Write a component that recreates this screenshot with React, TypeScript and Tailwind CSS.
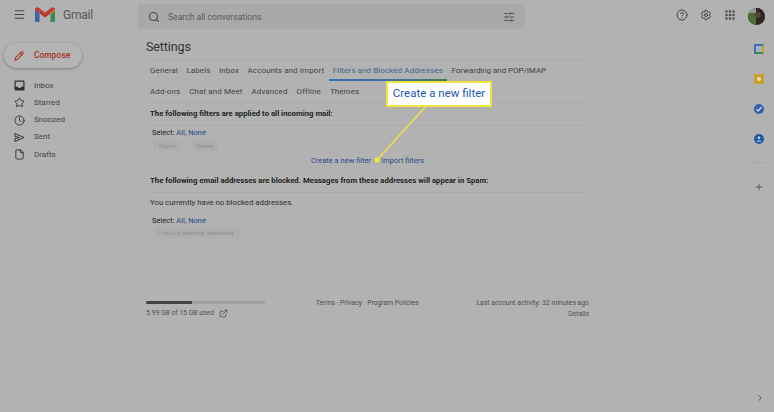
import { CircleHelp, ExternalLink, File, Clock, Menu, Pencil, Plus, Search, Settings, SlidersHorizontal, Star, ChevronRight, Grip } from 'lucide-react'
import type { ReactNode } from 'react'

const iconClass = 'h-[11px] w-[11px] text-[#333]'

function InboxIcon() {
  return (
    <svg width="11" height="11" viewBox="0 0 11 11">
      <path d="M1.500.5h8a1 1 0 0 1 1 1v8a1 1 0 0 1-1 1h-8a1 1 0 0 1-1-1v-8a1 1 0 0 1 1-1z" fill="#2f2f2f" />
      <path d="M1.700 1.700h7.600v5H7.200c-.3.9-1 1.300-1.700 1.300s-1.400-.4-1.700-1.300H1.700z" fill="#b2b2b2" />
    </svg>
  )
}

function SentIcon() {
  return (
    <svg width="11" height="11" viewBox="0 0 11 11">
      <path d="M1 1.500 10 5.500 1 9.500V6.500L5.500 5.500 1 4.500z" fill="none" stroke="#333" strokeWidth="1" strokeLinejoin="round" />
    </svg>
  )
}

const navItems: { label: string; icon: ReactNode }[] = [
  { label: 'Inbox', icon: <InboxIcon /> },
  { label: 'Starred', icon: <Star className={iconClass} /> },
  { label: 'Snoozed', icon: <Clock className={iconClass} /> },
  { label: 'Sent', icon: <SentIcon /> },
  { label: 'Drafts', icon: <File className={iconClass} /> },
]

const topTabs = ['General', 'Labels', 'Inbox', 'Accounts and Import', 'Filters and Blocked Addresses', 'Forwarding and POP/IMAP']
const bottomTabs = ['Add-ons', 'Chat and Meet', 'Advanced', 'Offline', 'Themes']

function GmailLogo() {
  return (
    <svg width="20" height="15" viewBox="0 0 20 15">
      <path d="M0 2v11.500A1.500 1.500 0 0 0 1.500 15H4.500V6z" fill="#3a66a8" />
      <path d="M20 2v11.500a1.500 1.500 0 0 1-1.500 1.500H15.500V6z" fill="#3b8a52" />
      <path d="M0 2.500C0 .5 2.300-.5 3.800.7L10 5.400 16.200.7C17.700-.5 20 .5 20 2.500L15.500 6V2.500L10 7 4.500 2.500V6z" fill="#c9372c" />
      <path d="M4.500 2.500 10 7l5.500-4.500V6.500L10 10.500 4.500 6.500z" fill="#b8342b" />
      <path d="M15.500 6 20 2.500V4l-4.500 3.500z" fill="#c7a02c" />
    </svg>
  )
}

function Avatar() {
  return (
    <svg width="17" height="17" viewBox="0 0 17 17">
      <defs>
        <clipPath id="avatar-clip">
          <circle cx="8.500" cy="8.500" r="8.500" />
        </clipPath>
      </defs>
      <g clipPath="url(#avatar-clip)">
        <rect width="17" height="17" fill="#3f4a33" />
        <rect x="0" y="0" width="8" height="6" fill="#8e9aa0" />
        <rect x="0" y="5" width="8" height="12" fill="#4d6b3a" />
        <rect x="8" y="0" width="9" height="17" fill="#2e2622" />
        <circle cx="10" cy="7" r="3" fill="#5a4436" />
      </g>
    </svg>
  )
}

function SidePanelIcons() {
  return (
    <div className="flex w-full flex-col items-center">
      <div className="mt-[11px] h-[10px] w-[10px] border-2 border-[#3f6fb5] border-r-[#c7a02c] border-b-[#3b8a52] bg-[#a9b3bd]" />
      <div className="mt-[20px] grid h-[10px] w-[10px] place-items-center rounded-[1px] bg-[#c9a227]">
        <div className="h-[4px] w-[4px] rounded-full bg-[#e4e0cc]" />
      </div>
      <div className="mt-[20px] grid h-[10px] w-[10px] place-items-center rounded-full bg-[#2f62ad]">
        <svg width="8" height="8" viewBox="0 0 8 8">
          <path d="M1.500 4.200 3.200 6 6.500 2" fill="none" stroke="#d8d8d8" strokeWidth="1.300" />
        </svg>
      </div>
      <div className="mt-[20px] grid h-[10px] w-[10px] place-items-center rounded-full bg-[#1f5aa8]">
        <svg width="8" height="8" viewBox="0 0 8 8">
          <circle cx="4" cy="2.800" r="1.300" fill="#d8d8d8" />
          <path d="M1.500 6.500c.3-1.500 4.700-1.500 5 0z" fill="#d8d8d8" />
        </svg>
      </div>
      <div className="mt-[18px] h-px w-[10px] bg-[#a4a4a4]" />
      <Plus className="mt-[19px] h-[10px] w-[10px] text-[#4a4a4a]" />
    </div>
  )
}

function SelectRow() {
  return (
    <div className="ml-[2px] text-[7.500px] leading-[9px] text-[#222]">
      Select: <span className="text-[#1f4488]">All</span>, <span className="text-[#1f4488]">None</span>
    </div>
  )
}

function GhostButton({ label }: { label: string }) {
  return <div className="rounded-[1px] bg-[#aeaeae] px-[5px] py-px text-[6px] leading-[9px] text-[#8f8f8f]">{label}</div>
}

export default function App() {
  return (
    <div
      className="relative h-[412px] w-[774px] overflow-hidden bg-[#b2b2b2] text-[#3c3c3c]"
      style={{ fontFamily: 'Roboto, "Liberation Sans", sans-serif' }}
    >
      <header className="flex h-[33px] items-start pt-[4px]">
        <div className="flex w-[138px] items-center pl-[13px] pt-[3px]">
          <Menu className="h-[13px] w-[13px] text-[#444]" />
          <div className="ml-[9px]">
            <GmailLogo />
          </div>
          <span className="ml-[8px] text-[12px] leading-none tracking-[-0.2px] text-[#555]">Gmail</span>
        </div>
        <div className="flex h-[25px] w-[387px] items-center rounded-[3px] bg-[#a9a9a9] pl-[10px] pr-[10px] pt-px">
          <Search className="h-[12px] w-[12px] text-[#444]" strokeWidth={2.2} />
          <span className="ml-[8px] text-[8.600px] text-[#5a5a5a]">Search all conversations</span>
          <SlidersHorizontal className="ml-auto h-[12px] w-[12px] text-[#555]" />
        </div>
        <div className="ml-[151px] flex items-center gap-[12px] pt-[5px]">
          <CircleHelp className="h-[12px] w-[12px] text-[#444]" />
          <Settings className="h-[12px] w-[12px] text-[#444]" />
          <Grip className="h-[12px] w-[12px] text-[#444]" strokeWidth={3} />
        </div>
        <div className="ml-[12px] pt-[4px]">
          <Avatar />
        </div>
      </header>

      <div className="flex h-[379px]">
        <aside className="w-[146px] pl-[4px] pt-[10px]">
          <div className="flex h-[25px] w-[78px] items-center rounded-full bg-[#b4b4b4] pl-[10px] shadow-[0_1px_3px_rgba(60,60,60,0.45)]">
            <Pencil className="h-[10px] w-[10px] text-[#a83228]" strokeWidth={2.5} />
            <span className="ml-[10px] text-[8.500px] font-medium text-[#a83228]">Compose</span>
          </div>
          <nav className="mt-[9px] flex flex-col">
            {navItems.map((item) => (
              <div key={item.label} className="flex h-[17.250px] items-center pl-[10px] text-[8px] text-[#444]">
                {item.icon}
                <span className="ml-[9px]">{item.label}</span>
              </div>
            ))}
          </nav>
        </aside>

        <main className="w-[443px]">
          <h1 className="pt-[5px] text-[12.500px] leading-[18px] tracking-[-0.1px] text-[#333]">Settings</h1>
          <div className="mt-[3px] border-t border-[#aaaaaa]" />
          <div className="flex h-[19px] items-center gap-[8.500px] pl-[4px] pt-[2px] text-[8px] tracking-[0.1px] text-[#444]">
            {topTabs.map((tab) => (
              <span
                key={tab}
                className={tab.startsWith('Filters') ? 'text-[#3e6390]' : tab.startsWith('Forwarding') ? 'tracking-[-0.05px]' : ''}
              >
                {tab}
              </span>
            ))}
          </div>
          <div className="ml-[183px] h-[1.500px] w-[118px] bg-gradient-to-r from-[#3d6ea8] via-[#3d6ea8] to-[#3f7d4e]" />
          <div className="flex h-[21px] items-center gap-[9px] pl-[4px] pt-[2px] text-[8px] tracking-[0.1px] text-[#444]">
            {bottomTabs.map((tab) => (
              <span key={tab}>{tab}</span>
            ))}
          </div>
          <div className="border-t border-[#aaaaaa]" />

          <div className="pl-[4px]">
            <p className="pt-[6px] text-[7.750px] font-bold leading-[10px] text-[#222]">
              The following filters are applied to all incoming mail:
            </p>
            <div className="mt-[6px] border-t border-[#aaaaaa]" />
            <div className="pt-[2px]">
              <SelectRow />
            </div>
            <div className="ml-[4px] mt-[3px] flex gap-[10px]">
              <GhostButton label="Export" />
              <GhostButton label="Delete" />
            </div>
            <div className="mt-[5px] flex justify-center gap-[10px] pr-[4px] text-[7.500px] leading-[10px] text-[#2a4a85]">
              <span>Create a new filter</span>
              <span>Import filters</span>
            </div>
            <p className="mt-[10px] text-[7.750px] font-bold leading-[10px] text-[#222]">
              The following email addresses are blocked. Messages from these addresses will appear in Spam:
            </p>
            <div className="mt-[6px] border-t border-[#aaaaaa]" />
            <p className="pt-[5px] text-[7.800px] leading-[10px] text-[#2e2e2e]">You currently have no blocked addresses.</p>
            <div className="pt-[8.500px]">
              <SelectRow />
            </div>
            <div className="ml-[4px] mt-[2px] flex">
              <GhostButton label="Unblock selected addresses" />
            </div>
          </div>

          <footer className="mt-[60px] flex justify-between text-[6.800px] text-[#505050]">
            <div className="w-[119px]">
              <div className="mt-[3px] h-[3px] overflow-hidden rounded-full bg-[#9e9e9e]">
                <div className="h-full w-[46px] bg-[#444]" />
              </div>
              <div className="mt-[4px] flex items-center gap-[5px] leading-[10px]">
                5.99 GB of 15 GB used
                <ExternalLink className="h-[9px] w-[9px] text-[#444]" />
              </div>
            </div>
            <div className="pr-[7px] leading-[10px]">Terms · Privacy · Program Policies</div>
            <div className="text-right leading-[10px]">
              <div>Last account activity: 32 minutes ago</div>
              <div className="mt-px">Details</div>
            </div>
          </footer>
        </main>

        <div className="ml-auto w-[30px]">
          <SidePanelIcons />
        </div>
      </div>

      <ChevronRight className="absolute bottom-[9px] right-[9px] h-[10px] w-[10px] text-[#444]" />

      <svg className="absolute left-0 top-0" width="774" height="412" viewBox="0 0 774 412">
        <line x1="426" y1="106" x2="377" y2="160" stroke="#f0e53c" strokeWidth="1.300" />
        <circle cx="377" cy="160" r="2.500" fill="#f5ea2a" />
      </svg>
      <div className="absolute left-[386px] top-[81px] flex h-[26px] w-[106px] items-center justify-center border-2 border-[#f0e53c] bg-white text-[11.500px] text-[#1d57b4]">
        Create a new filter
      </div>
    </div>
  )
}
